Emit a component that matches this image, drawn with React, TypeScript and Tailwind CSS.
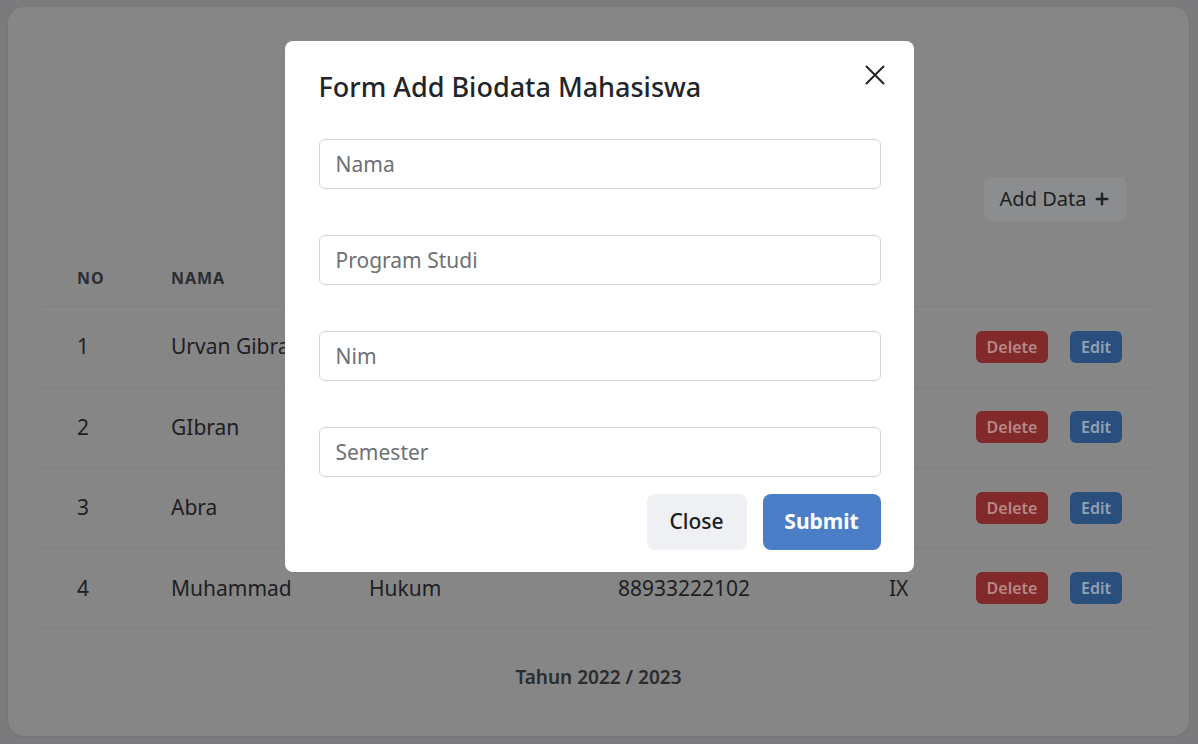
import { Plus } from "lucide-react";

const rows = [
  { no: 1, nama: "Urvan Gibran", prodi: "Informatika", nim: "88933222101", smt: "V" },
  { no: 2, nama: "GIbran", prodi: "Sistem Informasi", nim: "88933222099", smt: "III" },
  { no: 3, nama: "Abra", prodi: "Manajemen", nim: "88933222100", smt: "V" },
  { no: 4, nama: "Muhammad", prodi: "Hukum", nim: "88933222102", smt: "IX" },
];

const cols = "grid grid-cols-[95px_198px_249px_271px_87px_214px] items-center";

const fields = ["Nama", "Program Studi", "Nim", "Semester"];

export default function App() {
  return (
    <div className="relative min-h-[744px] bg-[#7b7b7d] px-2 pb-2 pt-[7px] font-['Noto_Sans',sans-serif]">
      {/* halaman utama (sudah redup oleh backdrop) */}
      <div className="h-[729px] w-[1181px] rounded-[16px] bg-[#868686] px-[34px] pt-[170px] shadow-[0_1px_3px_rgba(0,0,0,0.08)]">
        <div className="flex justify-end pr-[28px]">
          <button className="flex h-[44px] w-[143px] items-center justify-center gap-[7px] rounded-[8px] bg-[#8c8d8f] text-[20px] text-[#1c1f24]">
            Add Data
            <Plus className="size-[18px]" strokeWidth={3.2} />
          </button>
        </div>

        <div className="mt-[29px]">
          <div className={`${cols} h-[57px] border-b border-[#7f7f80] text-[16px] font-bold uppercase tracking-[0.06em] text-[#2b2d31]`}>
            <div className="pl-[35px]">No</div>
            <div className="pl-[34px]">Nama</div>
            <div className="pl-[34px]">Prodi</div>
            <div className="pl-[34px]">Nim</div>
            <div />
            <div />
          </div>
          {rows.map((r) => (
            <div
              key={r.no}
              className={`${cols} h-[80.5px] border-b border-[#7f7f80] text-[21px] text-[#1f2024]`}
            >
              <div className="pl-[35px]">{r.no}</div>
              <div className="pl-[34px]">{r.nama}</div>
              <div className="pl-[34px]">{r.prodi}</div>
              <div className="pl-[34px]">{r.nim}</div>
              <div className="pl-[34px]">{r.smt}</div>
              <div className="flex gap-[22px] pl-[34px]">
                <button className="h-[32px] w-[72px] rounded-[6px] bg-[#822a2a] text-[16px] font-semibold text-[#b58888]">
                  Delete
                </button>
                <button className="h-[32px] w-[52px] rounded-[6px] bg-[#2a4f7f] text-[16px] font-semibold text-[#93a1b3]">
                  Edit
                </button>
              </div>
            </div>
          ))}
        </div>

        <p className="mt-[34px] text-center text-[19px] font-semibold text-[#2a2c30]">
          Tahun 2022 / 2023
        </p>
      </div>

      {/* modal */}
      <div className="absolute inset-0 flex justify-center pt-[41px]">
        <div className="relative h-[531px] w-[629px] rounded-[8px] bg-white pl-[34px] pr-[33px]">
          <button className="absolute right-[29px] top-[24px] text-[#212529]">
            <svg width="20" height="20" viewBox="0 0 20 20" fill="none" stroke="currentColor" strokeWidth="2" strokeLinecap="round">
              <path d="M1.5 1.5 18.5 18.5M18.5 1.5 1.5 18.5" />
            </svg>
          </button>
          <h2 className="pt-[30px] text-[27px] font-medium leading-[32px] text-[#212529]">
            Form Add Biodata Mahasiswa
          </h2>
          <div className="mt-[36px] flex flex-col gap-[46px]">
            {fields.map((f) => (
              <input
                key={f}
                placeholder={f}
                className="h-[50px] w-full rounded-[6px] border border-[#d3d3d5] px-[16px] text-[21px] text-[#212529] outline-none placeholder:text-[#6e7073]"
              />
            ))}
          </div>
          <div className="mt-[17px] flex justify-end gap-[16px]">
            <button className="h-[56px] w-[100px] rounded-[8px] bg-[#eef0f4] text-[21px] font-medium text-[#1b1e22]">
              Close
            </button>
            <button className="h-[56px] w-[118px] rounded-[8px] bg-[#4a7fc8] text-[21px] font-bold text-white">
              Submit
            </button>
          </div>
        </div>
      </div>
    </div>
  );
}
